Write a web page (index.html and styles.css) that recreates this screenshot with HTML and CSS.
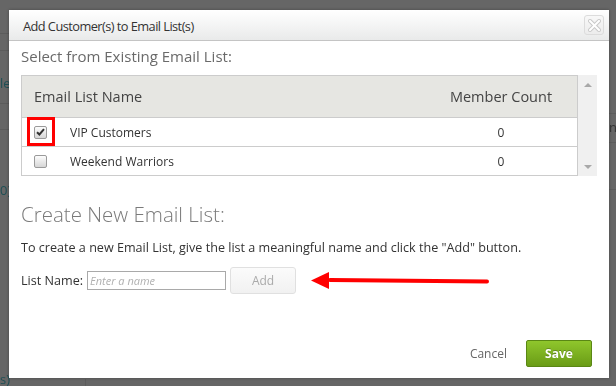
FILE: index.html
```html
<!DOCTYPE html>
<html lang="en">
<head>
  <meta charset="UTF-8" />
  <title>Add Customer(s) to Email List(s)</title>
  <link rel="stylesheet" href="styles.css">
</head>
<body>
  <!-- page behind the overlay -->
  <div class="backdrop">
    <span class="bg-text bg-le">le</span>
    <span class="bg-text bg-zero">0)</span>
    <span class="bg-text bg-s">s)</span>
    <span class="bg-text bg-na">na</span>
  </div>

  <div class="dialog">
    <header class="dialog-header">
      <div class="dialog-title">Add Customer(s) to Email List(s)</div>
      <button class="close-btn" aria-label="Close">
        <svg width="13" height="13" viewBox="0 0 13 13">
          <path d="M2 2 L11 11 M11 2 L2 11" stroke="#c8c8c8" stroke-width="4" stroke-linecap="square"/>
          <path d="M2 2 L11 11 M11 2 L2 11" stroke="#fff" stroke-width="2" stroke-linecap="square"/>
        </svg>
      </button>
    </header>

    <div class="dialog-body">
      <div class="section-label">Select from Existing Email List:</div>

      <div class="list-box">
        <div class="list-table">
          <div class="list-row list-head">
            <div class="col-name">Email List Name</div>
            <div class="col-count">Member Count</div>
          </div>
          <div class="list-row">
            <div class="col-check">
              <span class="check checked">
                <svg width="9" height="8" viewBox="0 0 9 8"><path d="M1 4.2 L3.4 6.5 L8 1.2" fill="none" stroke="#333" stroke-width="2"/></svg>
                <span class="highlight"></span>
              </span>
            </div>
            <div class="col-name">VIP Customers</div>
            <div class="col-count">0</div>
          </div>
          <div class="list-row">
            <div class="col-check"><span class="check"></span></div>
            <div class="col-name">Weekend Warriors</div>
            <div class="col-count">0</div>
          </div>
        </div>
        <div class="scrollbar">
          <span class="arrow-up"></span>
          <span class="arrow-down"></span>
        </div>
      </div>

      <h2 class="create-title">Create New Email List:</h2>
      <p class="create-help">To create a new Email List, give the list a meaningful name and click the "Add" button.</p>

      <div class="create-form">
        <label class="form-label" for="listName">List Name:</label>
        <input class="form-input" id="listName" type="text" placeholder="Enter a name">
        <button class="btn-add">Add</button>
        <svg class="pointer" width="180" height="20" viewBox="0 0 180 20">
          <path d="M20 9 L177 10.5" stroke="#f00" stroke-width="4" stroke-linecap="round"/>
          <path d="M1 9.5 L19 1 L19 18 Z" fill="#f00"/>
        </svg>
      </div>
    </div>

    <footer class="dialog-footer">
      <button class="btn-cancel">Cancel</button>
      <button class="btn-save">Save</button>
    </footer>
  </div>
</body>
</html>
```

FILE: styles.css
```css
:root {
  --overlay: #666666;
  --border: #cccccc;
  --text: #333333;
  --text-light: #777777;
  --head-bg: #e6e6e2;
  --green-top: #8fc62c;
  --green-bottom: #6a9c16;
  --font: 'Open Sans', 'DejaVu Sans', sans-serif;
}
html, body {
  margin: 0;
  height: 100%;
}
body {
  background: var(--overlay);
  font-family: var(--font);
  color: var(--text);
  padding: 10px 0 0 9px;
  box-sizing: border-box;
  overflow: hidden;
}
.backdrop {
  position: fixed;
  inset: 0;
  background:
    linear-gradient(#5c5c5c, #5c5c5c) 0 33px / 9px 1px no-repeat,
    linear-gradient(#5c5c5c, #5c5c5c) 0 50px / 9px 1px no-repeat,
    linear-gradient(#5c5c5c, #5c5c5c) 0 103px / 9px 1px no-repeat,
    linear-gradient(#5c5c5c, #5c5c5c) 0 129px / 9px 1px no-repeat,
    linear-gradient(#5c5c5c, #5c5c5c) 609px 113px / 7px 1px no-repeat,
    linear-gradient(#5c5c5c, #5c5c5c) 609px 142px / 7px 1px no-repeat,
    linear-gradient(#5c5c5c, #5c5c5c) 609px 189px / 7px 1px no-repeat,
    linear-gradient(#5c5c5c, #5c5c5c) 85px 379px / 1px 7px no-repeat,
    var(--overlay);
}
.bg-text {
  position: absolute;
  font-size: 13px;
  color: #1f4f55;
}
.bg-le { left: 0; top: 74px; }
.bg-zero { left: 0; top: 181px; }
.bg-s { left: 0; top: 370px; }
.bg-na { left: 609px; top: 118px; color: #333; }

.dialog {
  position: relative;
  width: 600px;
  height: 368px;
  background: #fff;
  display: flex;
  flex-direction: column;
  box-shadow: 0 0 3px rgba(0, 0, 0, 0.3);
}
.dialog-header {
  height: 31px;
  display: flex;
  align-items: center;
  justify-content: space-between;
  padding: 0 5px 0 14px;
  background: linear-gradient(#ffffff, #e9eaea);
  border-bottom: 1px solid #c4c4c4;
  box-sizing: border-box;
}
.dialog-title {
  font-size: 12.8px;
  letter-spacing: -0.55px;
  color: #333;
  padding-top: 1px;
}
.close-btn {
  align-self: flex-start;
  width: 20px;
  height: 20px;
  margin-top: 5px;
  padding: 0;
  border: 1px solid #dcdcdc;
  border-radius: 3px;
  background: linear-gradient(#f8f8f8, #ececec);
  display: flex;
  align-items: center;
  justify-content: center;
}
.dialog-body {
  padding: 0 12px;
  flex: 1;
}
.section-label {
  font-size: 15px;
  color: #6a6a6a;
  margin-top: 5px;
  line-height: 20px;
}
.list-box {
  display: flex;
  margin-top: 9px;
  height: 101px;
}
.list-table {
  width: 557px;
  border: 1px solid var(--border);
  box-sizing: border-box;
}
.list-row {
  display: flex;
  align-items: center;
  height: 29px;
  border-top: 1px solid var(--border);
  box-sizing: border-box;
  font-size: 12px;
}
.list-row.list-head {
  height: 41px;
  border-top: none;
  background: var(--head-bg);
  font-size: 14.5px;
  color: #444;
}
.list-head .col-name {
  padding-left: 12px;
}
.col-check {
  width: 48px;
  padding-left: 12px;
  box-sizing: border-box;
  display: flex;
  align-items: center;
}
.col-name {
  flex: 1;
}
.col-count {
  width: 152px;
  text-align: center;
}
.check {
  position: relative;
  width: 11px;
  height: 11px;
  border: 1px solid #9a9a9a;
  border-radius: 2px;
  background: linear-gradient(#fdfdfd, #d6d6d6);
  display: flex;
  align-items: center;
  justify-content: center;
}
.highlight {
  position: absolute;
  left: -8px;
  top: -10px;
  width: 22px;
  height: 23px;
  border: 3px solid #ff0000;
}
.scrollbar {
  width: 19px;
  background: #f0f0f0;
  display: flex;
  flex-direction: column;
  justify-content: space-between;
  align-items: center;
  padding: 8px 0 7px;
  box-sizing: border-box;
}
.arrow-up {
  border: 4px solid transparent;
  border-bottom: 4px solid #a8a8a8;
  border-top: none;
}
.arrow-down {
  border: 4px solid transparent;
  border-top: 4px solid #a8a8a8;
  border-bottom: none;
}
.create-title {
  margin: 25px 0 0;
  font-size: 20.5px;
  font-weight: 300;
  color: #7a7a7a;
  line-height: 26px;
}
.create-help {
  margin: 13px 0 0;
  font-size: 12.6px;
  line-height: 16px;
  color: #333;
}
.create-form {
  position: relative;
  display: flex;
  align-items: center;
  margin-top: 11px;
  font-size: 12.6px;
}
.form-label {
  margin-right: 4px;
}
.form-input {
  width: 139px;
  height: 19px;
  border: 1px solid #a9a9a9;
  padding: 0 2px;
  box-sizing: border-box;
  font-family: var(--font);
  font-size: 11px;
}
.form-input::placeholder {
  color: #b0b0b0;
  font-style: italic;
}
.btn-add {
  width: 66px;
  height: 27px;
  margin-left: 4px;
  border: 1px solid #e0e0e0;
  border-radius: 3px;
  background: linear-gradient(#fbfbfb, #f1f1f1);
  color: #aaa;
  font-family: var(--font);
  font-size: 12px;
}
.pointer {
  position: absolute;
  left: 289px;
  top: 4px;
}
.dialog-footer {
  display: flex;
  justify-content: flex-end;
  align-items: center;
  gap: 19px;
  padding: 0 17px 11px 0;
}
.btn-cancel {
  border: none;
  background: none;
  padding: 0;
  font-family: var(--font);
  font-size: 12px;
  color: #666;
}
.btn-save {
  width: 66px;
  height: 27px;
  border: 1px solid #5a8714;
  border-radius: 2px;
  background: linear-gradient(var(--green-top), var(--green-bottom));
  color: #fff;
  font-family: var(--font);
  font-weight: 700;
  font-size: 12px;
  text-shadow: 0 -1px 0 rgba(0, 0, 0, 0.25);
}
```
